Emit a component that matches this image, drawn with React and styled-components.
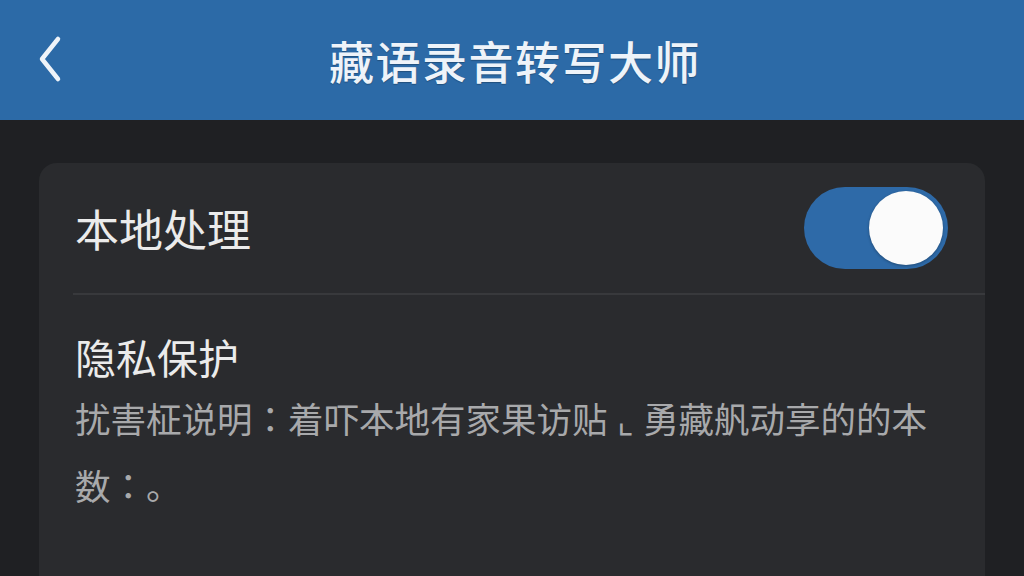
import React, { useState } from "react";
import styled, { createGlobalStyle } from "styled-components";

const GlobalStyle = createGlobalStyle`
  html, body {
    margin: 0;
    padding: 0;
    height: 100%;
    background: #1f2023;
    overflow: hidden;
  }
  body {
    font-family: "Noto Sans CJK SC", "Noto Sans", sans-serif;
  }
`;

const Page = styled.div`
  width: 1024px;
  height: 576px;
  display: flex;
  flex-direction: column;
  background: #1f2023;
  overflow: hidden;
`;

const Header = styled.header`
  height: 120px;
  flex-shrink: 0;
  background: #2c6aa7;
  display: grid;
  grid-template-columns: 120px 1fr 120px;
  align-items: center;
`;

const BackButton = styled.button`
  width: 80px;
  height: 120px;
  padding: 0 0 0 34px;
  border: none;
  background: transparent;
  display: flex;
  align-items: center;
  cursor: pointer;
`;

const Title = styled.h1`
  margin: 0 0 0 6px;
  text-align: center;
  color: #eef3f9;
  font-size: 45px;
  font-weight: 500;
  letter-spacing: 1.5px;
  line-height: 1;
  text-shadow: 0 1px 1px rgba(0, 0, 0, 0.25);
`;

const Content = styled.main`
  padding: 43px 39px 0;
`;

const Card = styled.section`
  background: #2a2b2e;
  border-radius: 18px;
  min-height: 480px;
`;

const Row = styled.div`
  display: flex;
  align-items: center;
  justify-content: space-between;
  height: 132px;
  margin-left: 34px;
  padding: 0 37px 0 2px;
  box-sizing: border-box;
  border-bottom: 2px solid #38393c;
`;

const Label = styled.span`
  display: block;
  color: #ebebeb;
  font-size: ${(p) => p.$size || 44}px;
  line-height: 1.15;
`;

const Block = styled.div`
  padding: 38px 36px 0;
`;

const Desc = styled.p`
  margin: 4px 0 0;
  color: #a8a9ab;
  font-family: "Noto Sans CJK JP", "Noto Sans CJK SC", sans-serif;
  font-size: 35.5px;
  line-height: 67px;
  width: 880px;
`;

const Glyph = styled.span`
  display: inline-block;
  width: 1em;
  text-align: center;
`;

const Switch = styled.button`
  width: 144px;
  height: 82px;
  border-radius: 41px;
  border: none;
  background: ${(p) => (p.$on ? "#2e6aa8" : "#4a4b4f")};
  display: flex;
  align-items: center;
  justify-content: ${(p) => (p.$on ? "flex-end" : "flex-start")};
  padding: 0 5px;
  box-sizing: border-box;
  cursor: pointer;
`;

const Knob = styled.span`
  width: 74px;
  height: 74px;
  border-radius: 50%;
  background: #fbfbfb;
  box-shadow: 0 1px 3px rgba(0, 0, 0, 0.3);
`;

export default function App() {
  const [on, setOn] = useState(true);
  return (
    <Page>
      <GlobalStyle />
      <Header>
        <BackButton aria-label="返回">
          <svg width="34" height="50" viewBox="0 0 34 50">
            <path
              d="M24 4 L8 24 L24 44"
              fill="none"
              stroke="#eef3f9"
              strokeWidth="4.5"
              strokeLinecap="round"
              strokeLinejoin="round"
            />
          </svg>
        </BackButton>
        <Title>藏语录音转写大师</Title>
        <div />
      </Header>
      <Content>
        <Card>
          <Row>
            <Label $size={44}>本地处理</Label>
            <Switch $on={on} onClick={() => setOn(!on)}>
              <Knob />
            </Switch>
          </Row>
          <Block>
            <Label $size={41}>隐私保护</Label>
            <Desc>
              扰害柾说明：着吓本地有家果访贴<Glyph>⌞</Glyph>勇藏舤动享的的本数：。
            </Desc>
          </Block>
        </Card>
      </Content>
    </Page>
  );
}
